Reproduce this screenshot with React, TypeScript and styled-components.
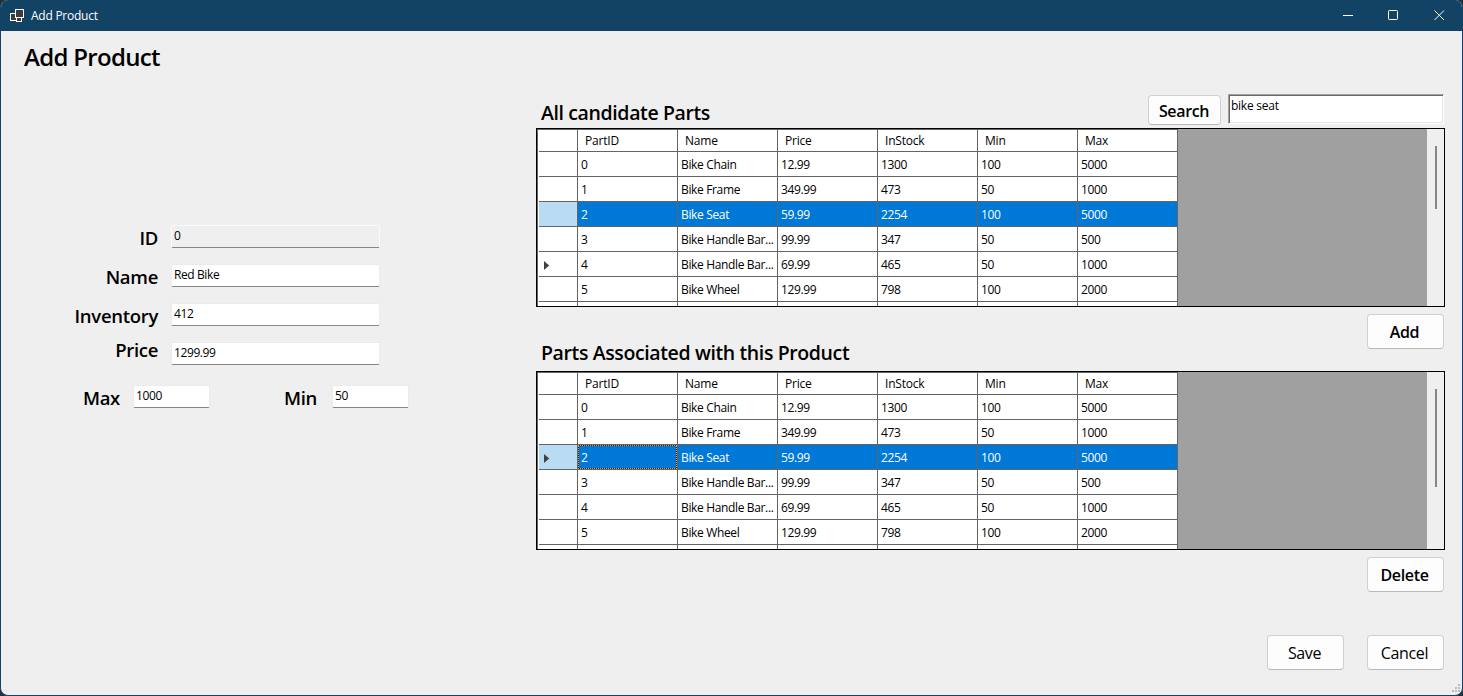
import React from "react";
import styled, { createGlobalStyle, css } from "styled-components";

const Global = createGlobalStyle`
  *, *::before, *::after { box-sizing: border-box; }
  html, body, #root { margin: 0; padding: 0; }
  body { background: #26303a; overflow: hidden; font-family: "Open Sans", "Noto Sans", sans-serif; font-size: 12px; color: #000; }
  input, button { font-family: inherit; color: inherit; margin: 0; outline: none; }
`;

const Window = styled.div`
  width: 1463px;
  height: 696px;
  display: flex;
  flex-direction: column;
  background: #efefef;
  border: 1px solid #124365;
  border-top: none;
  border-radius: 8px;
  overflow: hidden;
  position: relative;
`;

const TitleBar = styled.header`
  height: 31px;
  flex: none;
  display: flex;
  align-items: center;
  background: #124365;
  color: #fff;
  padding-left: 9px;
`;

const WindowTitle = styled.span`
  margin-left: 7px;
  flex: 1;
  line-height: 31px;
  letter-spacing: -0.25px;
`;

const Controls = styled.div`
  display: flex;
  svg { display: block; }
`;

const Control = styled.span`
  width: 46px;
  display: flex;
  justify-content: center;
`;

const Content = styled.main`
  flex: 1;
  display: flex;
`;

const Left = styled.section`
  width: 535px;
  flex: none;
`;

const PageTitle = styled.h1`
  margin: 8px 0 0 23px;
  font-size: 24px;
  line-height: 36px;
  font-weight: 600;
  letter-spacing: -0.68px;
`;

const Form = styled.form`
  margin-top: 150px;
  width: 420px;
`;

const Field = styled.div<{ $gap: number }>`
  display: flex;
  align-items: flex-start;
  height: 22px;
  margin-bottom: ${(p) => p.$gap}px;
`;

const Label = styled.label<{ $w: number; $shift: number }>`
  width: ${(p) => p.$w}px;
  flex: none;
  text-align: right;
  font-size: 18.5px;
  font-weight: 600;
  line-height: 24px;
  letter-spacing: -0.3px;
  margin-top: ${(p) => p.$shift}px;
  margin-right: 13px;
  white-space: nowrap;
`;

const TextBox = styled.input<{ $w: number }>`
  width: ${(p) => p.$w}px;
  height: 23px;
  flex: none;
  border: 1px solid #ebebeb;
  border-bottom: 1px solid #868686;
  border-radius: 2px;
  background: #fff;
  padding: 0 0 3px 2px;
  font-size: 12px;
  letter-spacing: -0.4px;
  &:read-only { background: #efefef; border-color: #fafafa #fafafa #868686; }
`;

const Pair = styled.div`
  display: flex;
`;

const Right = styled.section`
  width: 909px;
  flex: none;
`;

const SearchRow = styled.div`
  height: 97px;
  padding-top: 63px;
  display: flex;
  align-items: flex-start;
`;

const Heading = styled.h2<{ $top: number; $bottom?: number }>`
  margin: ${(p) => p.$top}px 0 ${(p) => p.$bottom ?? 0}px 5px;
  flex: 1;
  font-size: 19.5px;
  line-height: 26px;
  font-weight: 600;
  letter-spacing: -0.38px;
`;

const Button = styled.button<{ $w: number; $h: number; $weight: number }>`
  width: ${(p) => p.$w}px;
  height: ${(p) => p.$h}px;
  padding: 1px 2px 0 0;
  border: 1px solid #d0d0d0;
  border-bottom-color: #b9b9b9;
  border-radius: 4px;
  background: #fdfdfd;
  font-size: 16px;
  line-height: 20px;
  font-weight: ${(p) => p.$weight};
  letter-spacing: -0.35px;
`;

const SearchButton = styled(Button)`
  margin-top: 1px;
  padding-right: 1px;
`;

const SearchBox = styled.input`
  width: 216px;
  height: 30px;
  margin: 0 1px 0 7px;
  border: 1px solid;
  border-color: #a0a0a0 #fff #fff #a0a0a0;
  box-shadow: inset 1px 1px 0 #696969, inset -1px -1px 0 #e3e3e3;
  background: #fff;
  padding: 0 0 7px 2px;
  font-size: 12px;
  letter-spacing: -0.25px;
`;

const GridFrame = styled.div`
  height: 179px;
  border: 1px solid #000;
  background: #a0a0a0;
  display: flex;
  justify-content: space-between;
  overflow: hidden;
`;

const Table = styled.div`
  width: 641px;
  flex: none;
  border: 1px solid #646464;
  border-width: 1px 0 0 1px;
  background: #fff;
`;

const Row = styled.div<{ $head?: boolean; $selected?: boolean }>`
  display: grid;
  grid-template-columns: 39px repeat(6, 100px);
  height: ${(p) => (p.$head ? 22 : 25)}px;
  margin-left: 1px;
  line-height: ${(p) => (p.$head ? 22 : 26)}px;
  background: ${(p) => (p.$selected ? "#0078d7" : "#fff")};
  color: ${(p) => (p.$selected ? "#fff" : "#000")};
`;

const focusRect = css`
  position: relative;
  &::before, &::after { content: ""; position: absolute; inset: 0; border: 1px solid #1c2430; }
  &::after { border: 1px dotted #ff9a3c; }
`;

const Cell = styled.div<{ $head?: boolean; $focus?: boolean }>`
  border-right: 1px solid #646464;
  border-bottom: 1px solid #646464;
  padding-left: ${(p) => (p.$head ? 7 : 3)}px;
  letter-spacing: ${(p) => (p.$head ? -0.2 : -0.35)}px;
  white-space: nowrap;
  overflow: hidden;
  ${(p) => p.$focus && focusRect}
`;

const RowHeader = styled(Cell)<{ $selected?: boolean }>`
  background: ${(p) => (p.$selected ? "#b9dbf3" : "#fff")};
  padding: 8px 0 0 4px;
  svg { display: block; }
`;

const ScrollTrack = styled.div`
  width: 17px;
  background: #efefef;
  padding: 17px 0 0 8px;
`;

const ScrollThumb = styled.div<{ $h: number }>`
  width: 2px;
  height: ${(p) => p.$h}px;
  background: #868686;
`;

const Actions = styled.div<{ $top: number }>`
  display: flex;
  justify-content: flex-end;
  gap: 23px;
  padding: ${(p) => p.$top}px 1px 0 0;
`;

const Grip = styled.svg`
  position: absolute;
  right: 0;
  bottom: 0;
`;

const columns = ["PartID", "Name", "Price", "InStock", "Min", "Max"];
const parts = [
  ["0", "Bike Chain", "12.99", "1300", "100", "5000"],
  ["1", "Bike Frame", "349.99", "473", "50", "1000"],
  ["2", "Bike Seat", "59.99", "2254", "100", "5000"],
  ["3", "Bike Handle Bar...", "99.99", "347", "50", "500"],
  ["4", "Bike Handle Bar...", "69.99", "465", "50", "1000"],
  ["5", "Bike Wheel", "129.99", "798", "100", "2000"],
  ["", "", "", "", "", ""],
];

function PartsGrid({ current, focused, thumb }: { current: number; focused?: boolean; thumb: number }) {
  return (
    <GridFrame>
      <Table>
        <Row $head>
          <Cell />
          {columns.map((c) => (
            <Cell key={c} $head>{c}</Cell>
          ))}
        </Row>
        {parts.map((row, i) => (
          <Row key={i} $selected={i === 2}>
            <RowHeader $selected={i === 2}>
              {i === current && (
                <svg width="7" height="11" viewBox="0 0 7 11">
                  <path d="M1 1 L6.2 5.5 L1 10 Z" fill="#404040" />
                </svg>
              )}
            </RowHeader>
            {row.map((v, j) => (
              <Cell key={j} $focus={focused && i === 2 && j === 0}>{v}</Cell>
            ))}
          </Row>
        ))}
      </Table>
      <ScrollTrack>
        <ScrollThumb $h={thumb} />
      </ScrollTrack>
    </GridFrame>
  );
}

export default function App() {
  return (
    <>
      <Global />
      <Window>
        <TitleBar>
          <svg width="14" height="14" viewBox="0 0 14 14" fill="#3c3c3c" stroke="#fff">
            <rect x="0.5" y="4.5" width="6" height="7" />
            <rect x="6.5" y="8.5" width="5" height="4" />
            <rect x="5.5" y="0.5" width="8" height="8" />
          </svg>
          <WindowTitle>Add Product</WindowTitle>
          <Controls>
            <Control>
              <svg width="12" height="11"><path d="M2 5.5H12" stroke="#fff" /></svg>
            </Control>
            <Control>
              <svg width="11" height="11"><rect x="0.5" y="0.5" width="9" height="9" rx="0.8" fill="none" stroke="#fff" /></svg>
            </Control>
            <Control>
              <svg width="11" height="11"><path d="M0.5 0.5L10 10M10 0.5L0.5 10" stroke="#fff" /></svg>
            </Control>
          </Controls>
        </TitleBar>
        <Content>
          <Left>
            <PageTitle>Add Product</PageTitle>
            <Form>
              <Field $gap={17}>
                <Label $w={157} $shift={1}>ID</Label>
                <TextBox $w={209} readOnly value="0" />
              </Field>
              <Field $gap={17}>
                <Label $w={157} $shift={1}>Name</Label>
                <TextBox $w={209} defaultValue="Red Bike" />
              </Field>
              <Field $gap={17}>
                <Label $w={157} $shift={1}>Inventory</Label>
                <TextBox $w={209} defaultValue="412" />
              </Field>
              <Field $gap={21}>
                <Label $w={157} $shift={-4}>Price</Label>
                <TextBox $w={209} defaultValue="1299.99" />
              </Field>
              <Pair>
                <Field $gap={0}>
                  <Label $w={119} $shift={1}>Max</Label>
                  <TextBox $w={77} defaultValue="1000" />
                </Field>
                <Field $gap={0}>
                  <Label $w={107} $shift={1}>Min</Label>
                  <TextBox as={MinBox} $w={77} defaultValue="50" />
                </Field>
              </Pair>
            </Form>
          </Left>
          <Right>
            <SearchRow>
              <Heading $top={6}>All candidate Parts</Heading>
              <SearchButton $w={73} $h={30} $weight={600}>Search</SearchButton>
              <SearchBox defaultValue="bike seat" />
            </SearchRow>
            <PartsGrid current={4} thumb={63} />
            <Actions $top={7}>
              <Button $w={77} $h={35} $weight={600}>Add</Button>
            </Actions>
            <Heading $top={-9} $bottom={5}>Parts Associated with this Product</Heading>
            <PartsGrid current={2} focused thumb={98} />
            <Actions $top={7}>
              <Button $w={77} $h={35} $weight={600}>Delete</Button>
            </Actions>
            <Actions $top={43}>
              <Button $w={77} $h={35} $weight={400}>Save</Button>
              <Button $w={77} $h={35} $weight={400}>Cancel</Button>
            </Actions>
          </Right>
        </Content>
        <Grip width="11" height="11" viewBox="0 0 11 11" fill="#bcbcbc">
          <path d="M7 0h2v2h-2zM4 3h2v2h-2zM7 3h2v2h-2zM1 6h2v2h-2zM4 6h2v2h-2zM7 6h2v2h-2z" />
        </Grip>
      </Window>
    </>
  );
}

const MinBox = styled(TextBox)`
  margin-left: 2px;
`;
